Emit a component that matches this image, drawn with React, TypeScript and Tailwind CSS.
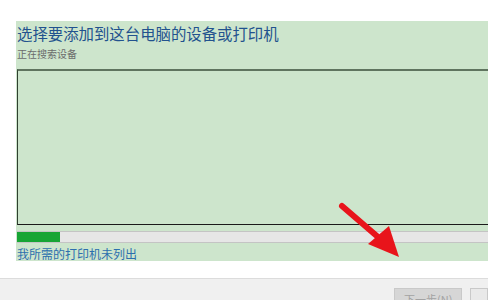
import React from "react";

export default function App() {
  const cjk = { fontFamily: '"Microsoft YaHei", "Noto Sans CJK SC", sans-serif' };
  return (
    <div className="relative w-[488px] h-[300px] bg-white overflow-hidden flex flex-col" style={cjk}>
      <div className="h-[21px] shrink-0" />
      <div className="ml-[16px] h-[240px] bg-[#cde5cc] flex flex-col pl-[1px] shrink-0">
        <div className="mt-[2px] h-[20px] text-[15.4px] leading-[20px] text-[#22528e] whitespace-nowrap">
          选择要添加到这台电脑的设备或打印机
        </div>
        <div className="mt-[5px] h-[12px] text-[10px] leading-[12px] text-[#6b6b6b] whitespace-nowrap">
          正在搜索设备
        </div>
        <div className="mt-[9px] h-[157px] border-l border-t-2 border-b border-l-[#2f3f2f] border-t-[#5f745f] border-b-[#1a1a1a] bg-[#cde5cc]" />
        <div className="mt-[6px] h-[12px] flex border-y border-[#c4c4c4] bg-[#e6e6e6]">
          <div className="w-[43px] bg-[#17a534]" />
        </div>
        <div className="mt-[4px] h-[14px] text-[12px] leading-[14px] text-[#2c6fae] whitespace-nowrap">
          我所需的打印机未列出
        </div>
      </div>
      <div className="h-[17px] shrink-0" />
      <div className="flex-1 border-t border-[#dcdcdc] bg-[#f0f0f0] flex items-start pt-[9px] pl-[394px] gap-[8px]">
        <div className="w-[79px] h-[22px] border border-[#c9c9c9] bg-[#d6d6d6] text-[11px] leading-[20px] text-[#a3a3a3] text-center whitespace-nowrap">
          下一步(N)
        </div>
        <div className="w-[20px] h-[22px] border border-[#c9c9c9] bg-[#e9e9e9]" />
      </div>
      <svg className="absolute left-0 top-0" width="488" height="300" viewBox="0 0 488 300">
        <line x1="342" y1="206" x2="378" y2="237" stroke="#e8141b" strokeWidth="6" strokeLinecap="round" />
        <polygon points="368,244 389,226 399,257" fill="#e8141b" />
      </svg>
    </div>
  );
}
